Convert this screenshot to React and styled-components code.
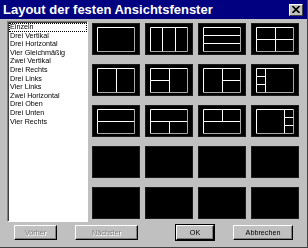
import React from 'react'
import styled, { createGlobalStyle } from 'styled-components'

const GlobalStyle = createGlobalStyle`
  html, body {
    margin: 0;
    padding: 0;
    background: #c0c0c0;
  }
  body {
    font-family: "Liberation Sans", Arial, sans-serif;
  }
`

const layouts = [
  { name: 'Einzeln', cells: [[0, 0, 1, 1]] },
  { name: 'Drei Vertikal', cells: [[0, 0, 1 / 3, 1], [1 / 3, 0, 2 / 3, 1], [2 / 3, 0, 1, 1]] },
  { name: 'Drei Horizontal', cells: [[0, 0, 1, 1 / 3], [0, 1 / 3, 1, 2 / 3], [0, 2 / 3, 1, 1]] },
  { name: 'Vier Gleichmäßig', cells: [[0, 0, 0.5, 0.5], [0.5, 0, 1, 0.5], [0, 0.5, 0.5, 1], [0.5, 0.5, 1, 1]] },
  { name: 'Zwei Vertikal', cells: [[0, 0, 0.5, 1], [0.5, 0, 1, 1]] },
  { name: 'Drei Rechts', cells: [[0, 0, 0.5, 0.5], [0, 0.5, 0.5, 1], [0.5, 0, 1, 1]] },
  { name: 'Drei Links', cells: [[0, 0, 0.5, 1], [0.5, 0, 1, 0.5], [0.5, 0.5, 1, 1]] },
  { name: 'Vier Links', cells: [[0, 0, 0.25, 1 / 3], [0, 1 / 3, 0.25, 2 / 3], [0, 2 / 3, 0.25, 1], [0.25, 0, 1, 1]] },
  { name: 'Zwei Horizontal', cells: [[0, 0, 1, 0.5], [0, 0.5, 1, 1]] },
  { name: 'Drei Oben', cells: [[0, 0, 1, 0.5], [0, 0.5, 0.5, 1], [0.5, 0.5, 1, 1]] },
  { name: 'Drei Unten', cells: [[0, 0, 0.5, 0.5], [0.5, 0, 1, 0.5], [0, 0.5, 1, 1]] },
  { name: 'Vier Rechts', cells: [[0, 0, 0.75, 1], [0.75, 0, 1, 1 / 3], [0.75, 1 / 3, 1, 2 / 3], [0.75, 2 / 3, 1, 1]] }
]

const Dialog = styled.div`
  width: 308px;
  height: 248px;
  box-sizing: border-box;
  background: #c0c0c0;
  border-right: 1px solid #404040;
  border-bottom: 1px solid #404040;
  display: flex;
  flex-direction: column;
`

const TitleBar = styled.div`
  height: 19px;
  background: #000080;
  display: flex;
  align-items: center;
  padding-left: 3px;
`

const Title = styled.span`
  color: #fff;
  font-weight: bold;
  font-size: 13px;
  line-height: 19px;
`

const CloseButton = styled.div`
  margin-left: auto;
  margin-right: 4px;
  width: 14px;
  height: 12px;
  box-sizing: border-box;
  background: #c0c0c0;
  border-top: 1px solid #fff;
  border-left: 1px solid #fff;
  border-right: 1px solid #404040;
  border-bottom: 1px solid #404040;
  display: flex;
  align-items: center;
  justify-content: center;
`

const Body = styled.div`
  display: flex;
  padding: 2px 0 0 7px;
`

const ListBox = styled.div`
  width: 81px;
  height: 201px;
  box-sizing: border-box;
  background: #fff;
  border-top: 1px solid #808080;
  border-left: 1px solid #808080;
  border-right: 1px solid #fff;
  border-bottom: 1px solid #fff;
  box-shadow: inset 1px 1px 0 #404040;
  padding: 1px 0 0 1px;
`

const ListItem = styled.div`
  font-size: 7.2px;
  line-height: 8.6px;
  height: 8.6px;
  color: #000;
  padding-left: 1px;
  white-space: nowrap;
  will-change: transform;
  outline: ${props => (props.focused ? '1px dotted #000' : 'none')};
  outline-offset: -1px;
`

const Grid = styled.div`
  margin: 2px 0 0 4px;
  display: grid;
  grid-template-columns: repeat(4, 48px);
  grid-auto-rows: 32px;
  column-gap: 5px;
  row-gap: 9px;
`

const Tile = styled.div`
  background: #000;
  box-sizing: border-box;
  border: 1px solid #1c1c1c;
  display: flex;
`

const ButtonRow = styled.div`
  display: flex;
  margin-top: 3px;
  height: 15px;
`

const Button = styled.div`
  width: ${props => props.w}px;
  margin-left: ${props => props.ml}px;
  box-sizing: border-box;
  height: 15px;
  background: #c0c0c0;
  border-top: 1px solid #fff;
  border-left: 1px solid #fff;
  border-right: 1px solid #000;
  border-bottom: 1px solid #000;
  box-shadow: ${props => (props.primary ? '0 0 0 1px #000, inset -1px -1px 0 #808080' : 'inset -1px -1px 0 #808080')};
  font-size: 7.2px;
  line-height: 13px;
  text-align: center;
  will-change: transform;
  color: ${props => (props.disabled ? '#808080' : '#000')};
  text-shadow: ${props => (props.disabled ? '1px 1px 0 #fff' : 'none')};
`

const IX = 4
const IY = 3
const IW = 37
const IH = 24

const px = (f, base, size) => Math.round(base + f * size) + 0.5

const LayoutIcon = ({ cells }) => (
  <svg width="46" height="30" viewBox="0 0 46 30">
    {cells.map(([x0, y0, x1, y1], i) => {
      const l = px(x0, IX, IW)
      const r = px(x1, IX, IW)
      const t = px(y0, IY, IH)
      const b = px(y1, IY, IH)
      return (
        <g key={i} strokeWidth="1" fill="none">
          <path d={`M${l} ${b} V${t} H${r}`} stroke="#ffffff" />
          <path d={`M${r} ${t} V${b} H${l}`} stroke="#a8a8a8" />
        </g>
      )
    })}
  </svg>
)

const App = () => (
  <>
    <GlobalStyle />
    <Dialog>
      <TitleBar>
        <Title>Layout der festen Ansichtsfenster</Title>
        <CloseButton>
          <svg width="8" height="7" viewBox="0 0 8 7">
            <path d="M0.5 0 L7.5 7 M7.5 0 L0.5 7" stroke="#000" strokeWidth="1.6" />
          </svg>
        </CloseButton>
      </TitleBar>
      <Body>
        <ListBox>
          {layouts.map((layout, i) => (
            <ListItem key={layout.name} focused={i === 0}>
              {layout.name}
            </ListItem>
          ))}
        </ListBox>
        <Grid>
          {layouts.map(layout => (
            <Tile key={layout.name}>
              <LayoutIcon cells={layout.cells} />
            </Tile>
          ))}
          {Array.from({ length: 8 }).map((_, i) => (
            <Tile key={'empty' + i} />
          ))}
        </Grid>
      </Body>
      <ButtonRow>
        <Button w={43} ml={14} disabled>Vorher</Button>
        <Button w={63} ml={18} disabled>Nächster</Button>
        <Button w={38} ml={38} primary>OK</Button>
        <Button w={60} ml={19}>Abbrechen</Button>
      </ButtonRow>
    </Dialog>
  </>
)

export default App
